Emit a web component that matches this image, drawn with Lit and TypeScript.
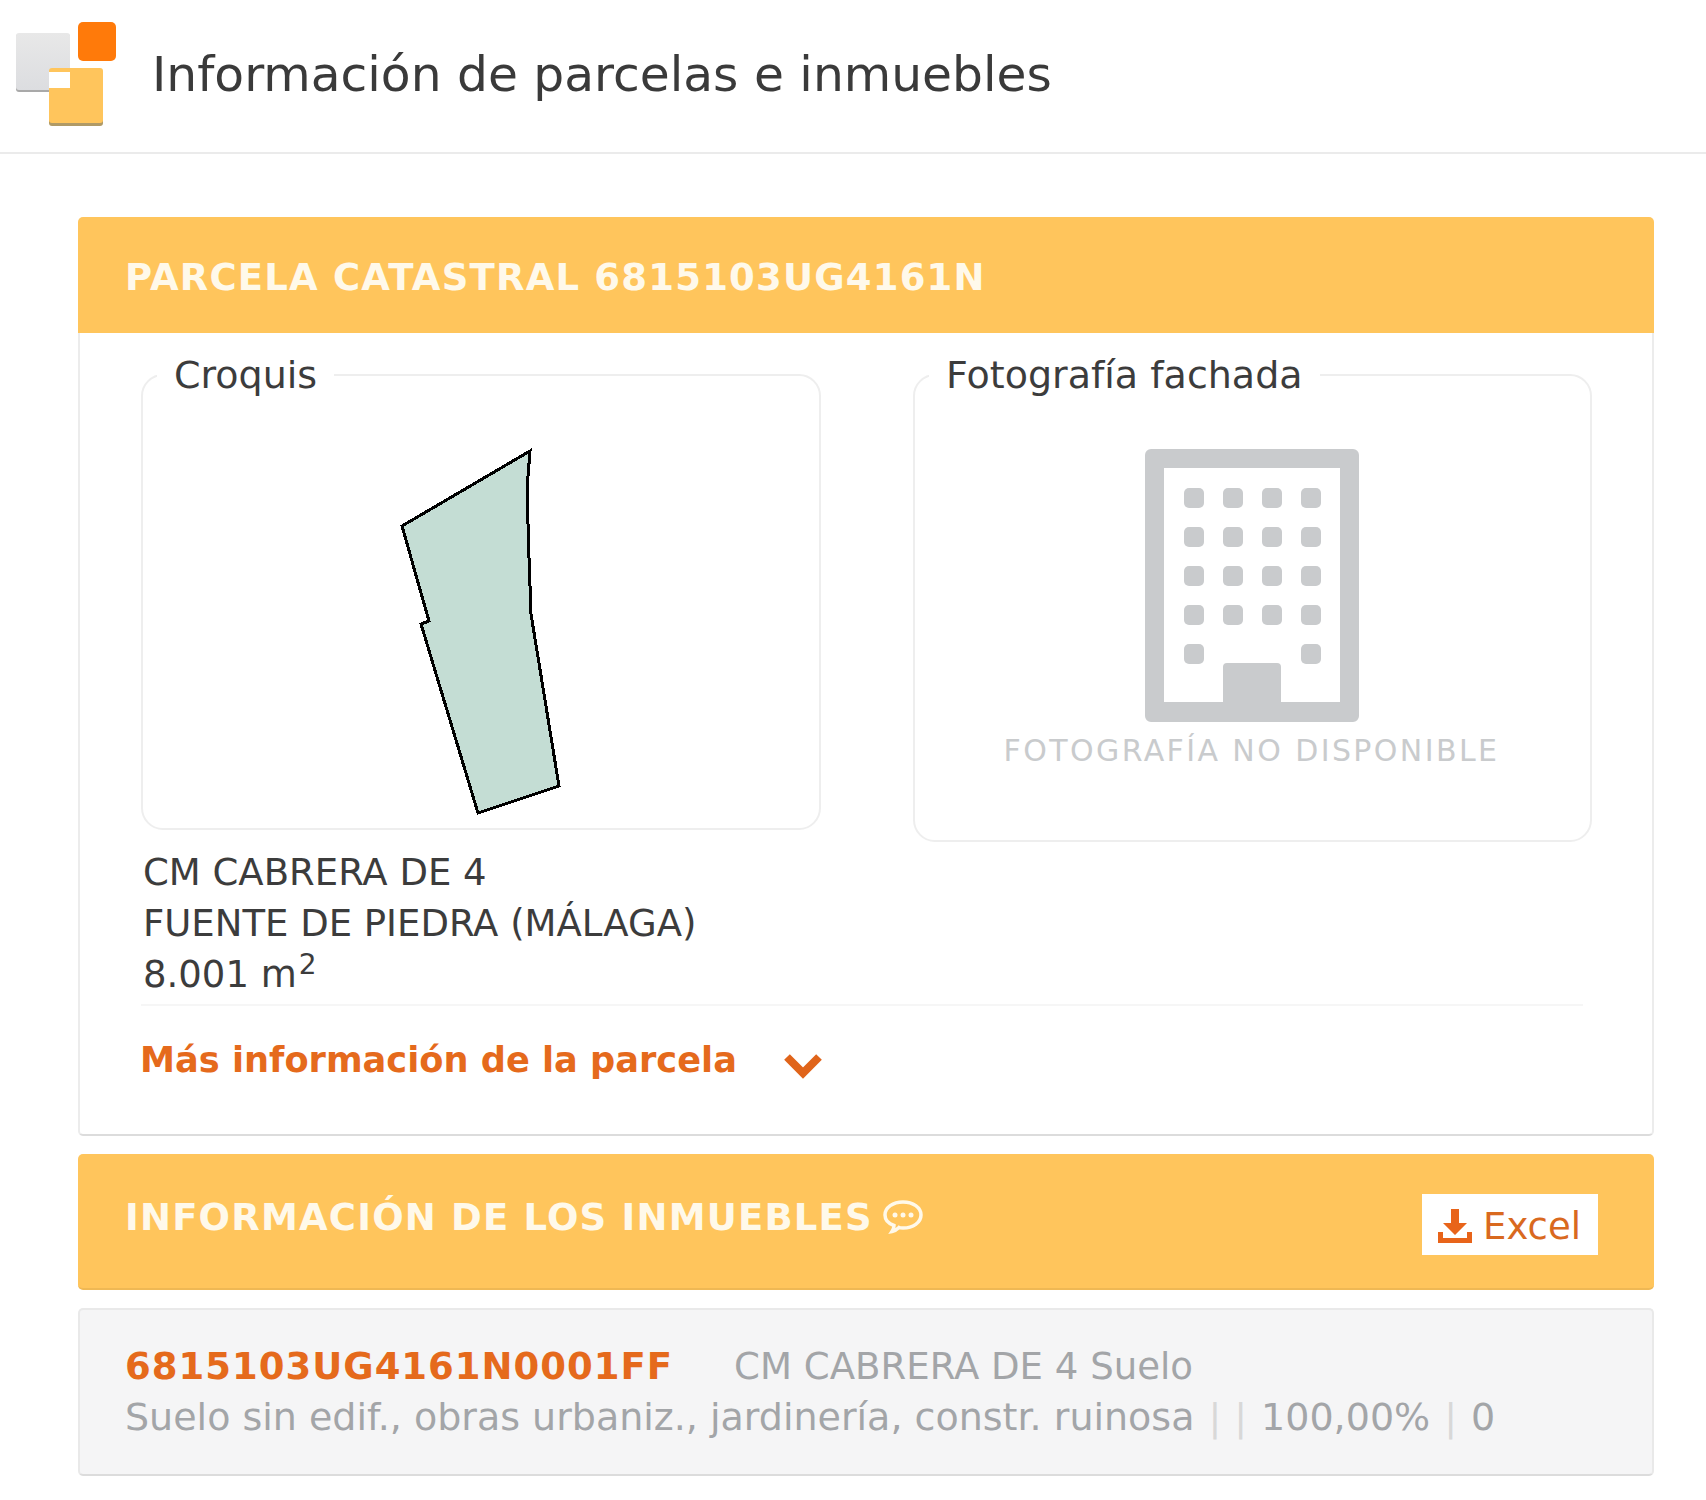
import { LitElement, html, svg, css } from 'lit';
import { customElement } from 'lit/decorators.js';

// window grid of the placeholder building, in svg units
const windowCols = [0, 1, 2, 3];
const windowRows = [0, 1, 2, 3];

@customElement('app-root')
export class AppRoot extends LitElement {
  static styles = css`
    :host {
      display: block;
      font-family: "DejaVu Sans", sans-serif;
      color: #3c3c3c;
      background: #fff;
      height: 1500px;
    }
    .top {
      display: flex;
      align-items: center;
      height: 152px;
      border-bottom: 2px solid #ebebeb;
      padding-left: 14px;
    }
    .top svg { display: block; margin-right: 34px; margin-top: -6px; }
    .top h1 {
      margin: 0;
      font-size: 48.7px;
      font-weight: 400;
      color: #3a3a3a;
      margin-top: -5px;
    }
    main { width: 1576px; margin: 63px 0 0 78px; }
    .bar {
      display: flex;
      align-items: center;
      justify-content: space-between;
      box-sizing: border-box;
      background: #ffc55c;
      border-radius: 5px 5px 0 0;
      padding: 0 56px 0 47px;
      color: #fff9ea;
      font-size: 37px;
      font-weight: 700;
      letter-spacing: 1.2px;
    }
    .bar.first { height: 116px; padding-top: 4px; }
    .bar.second {
      height: 136px;
      margin-top: 18px;
      padding-top: 6px;
      border-radius: 5px;
      border-bottom: 2px solid #efb854;
    }
    .bar .title { display: flex; align-items: center; gap: 9px; margin-top: -14px; }
    .bar svg { display: block; }
    .excel {
      display: flex;
      align-items: center;
      gap: 10px;
      box-sizing: border-box;
      width: 176px;
      height: 61px;
      padding: 4px 0 0 15px;
      background: #fff;
      color: #d9691f;
      font-size: 37px;
      font-weight: 400;
      letter-spacing: 0;
    }
    .card {
      box-sizing: border-box;
      height: 803px;
      padding: 17px 61px 0 61px;
      border: 2px solid #ececec;
      border-top: 0;
      border-bottom-color: #dcdcdc;
      border-radius: 0 0 5px 5px;
    }
    .cols { display: flex; gap: 92px; align-items: flex-start; }
    .col { flex: none; width: 680px; }
    .col + .col { width: 679px; }
    fieldset {
      box-sizing: border-box;
      display: block;
      margin: 0;
      padding: 0;
      min-width: 0;
      border: 2px solid #eeeeee;
      border-radius: 22px;
    }
    legend {
      margin-left: 14px;
      padding: 0 17px;
      font-size: 38px;
      line-height: 50px;
      color: #3c3c3c;
    }
    .sketch { height: 428px; }
    .sketch svg { display: block; }
    .photo {
      display: flex;
      flex-direction: column;
      align-items: center;
      box-sizing: border-box;
      height: 440px;
      padding: 49px 2px 0 0;
    }
    .photo span {
      margin-top: 11px;
      font-size: 30px;
      line-height: 36px;
      letter-spacing: 2.4px;
      color: #c9cbcd;
      white-space: nowrap;
    }
    .address {
      margin: 17px 0 0 2px;
      font-size: 37px;
      line-height: 51px;
      color: #3c3c3c;
    }
    sup { font-size: 28px; line-height: 0; vertical-align: 13px; margin-left: 2px; }
    .more {
      display: flex;
      align-items: center;
      margin: 4px 8px 0 0;
      padding-top: 28px;
      border-top: 2px solid #f6f6f6;
      font-size: 35.2px;
      line-height: 51px;
      font-weight: 700;
      color: #e56a1c;
    }
    .more span { margin-left: -1px; }
    .more svg { margin: 10px 0 0 44px; display: block; }
    .row {
      box-sizing: border-box;
      height: 168px;
      margin-top: 18px;
      padding: 32px 45px 0;
      background: #f5f5f6;
      border: 2px solid #e9e9e9;
      border-bottom-color: #dcdcdc;
      border-radius: 5px;
      font-size: 37.1px;
      line-height: 50px;
      color: #a3a5a8;
    }
    .row .line { display: flex; white-space: nowrap; }
    .row .line + .line { font-size: 38px; }
    .row b { color: #e56a1c; margin-right: 61px; font-size: 37px; letter-spacing: 1px; }
    .sep { color: #d8d8d8; font-weight: 400; padding: 0 14px; }
    .sep + .sep { margin-left: -15px; }
  `;

  render() {
    return html`
      <div class="top">
        <svg width="104" height="106" viewBox="0 0 104 106">
          <defs>
            <linearGradient id="g" x1="0" y1="0" x2="0" y2="1">
              <stop offset="0" stop-color="#e8e8e8"/><stop offset="1" stop-color="#dcdde0"/>
            </linearGradient>
          </defs>
          <rect x="2" y="14" width="54" height="58" rx="3" fill="#a9a9a9"/>
          <rect x="2" y="13" width="54" height="57" rx="3" fill="url(#g)"/>
          <rect x="35" y="50" width="54" height="56" rx="3" fill="#b09a66"/>
          <rect x="35" y="48" width="54" height="55" rx="3" fill="#ffc55c"/>
          <rect x="35" y="52" width="21" height="16" fill="#fff"/>
          <rect x="64" y="2" width="38" height="39" rx="5" fill="#ff7a0a"/>
        </svg>
        <h1>Información de parcelas e inmuebles</h1>
      </div>
      <main>
        <div class="bar first"><span>PARCELA CATASTRAL 6815103UG4161N</span></div>
        <section class="card">
          <div class="cols">
            <div class="col">
              <fieldset>
                <legend>Croquis</legend>
                <div class="sketch">
                  <svg width="675" height="428" viewBox="0 0 675 428">
                    <polygon
                      points="387,51 384,89 386,158 388,214 416,386 335,413 278,224 286,221 259,126"
                      fill="#c4ddd4" stroke="#000" stroke-width="3" shape-rendering="crispEdges"/>
                  </svg>
                </div>
              </fieldset>
              <div class="address">
                CM CABRERA DE 4<br />
                FUENTE DE PIEDRA (MÁLAGA)<br />
                8.001 m<sup>2</sup>
              </div>
            </div>
            <div class="col">
              <fieldset>
                <legend>Fotografía fachada</legend>
                <div class="photo">
                  <svg width="214" height="273" viewBox="0 0 214 273">
                    <path fill="#c9cbcd" fill-rule="evenodd"
                      d="M6 0h202a6 6 0 0 1 6 6v261a6 6 0 0 1-6 6H6a6 6 0 0 1-6-6V6a6 6 0 0 1 6-6zM19 19v234h59v-35a4 4 0 0 1 4-4h50a4 4 0 0 1 4 4v35h59V19z"/>
                    ${windowRows.map((r) =>
                      windowCols.map(
                        (c) =>
                          svg`<rect x=${39 + c * 39} y=${39 + r * 39} width="20" height="20" rx="5" fill="#c9cbcd"/>`
                      )
                    )}
                    <rect x="39" y="195" width="20" height="20" rx="5" fill="#c9cbcd"/>
                    <rect x="156" y="195" width="20" height="20" rx="5" fill="#c9cbcd"/>
                  </svg>
                  <span>FOTOGRAFÍA NO DISPONIBLE</span>
                </div>
              </fieldset>
            </div>
          </div>
          <div class="more">
            <span>Más información de la parcela</span>
            <svg width="44" height="30" viewBox="0 0 44 30">
              <polyline points="6,7 22,23 38,7" fill="none" stroke="#e0641a" stroke-width="8"/>
            </svg>
          </div>
        </section>
        <div class="bar second">
          <span class="title">
            INFORMACIÓN DE LOS INMUEBLES
            <svg width="42" height="36" viewBox="0 0 42 36">
              <path d="M21 3c10 0 18 5.500 18 13s-8 13-18 13c-1.500 0-3 0-4-.500-2 2-4.500 3.500-7 4 1-1.500 2-3.500 2-6C6 24.500 3 20.500 3 16 3 8.500 11 3 21 3z"
                fill="none" stroke="#fff9ea" stroke-width="3.500"/>
              <circle cx="13" cy="16" r="2.500" fill="#fff9ea"/>
              <circle cx="21" cy="16" r="2.500" fill="#fff9ea"/>
              <circle cx="29" cy="16" r="2.500" fill="#fff9ea"/>
            </svg>
          </span>
          <span class="excel">
            <svg width="36" height="36" viewBox="0 0 36 36">
              <path d="M14 1h8v14h8L18 27 6 15h8z" fill="#e8641a"/>
              <path d="M1 24h5v6h24v-6h5v11H1z" fill="#e8641a"/>
            </svg>
            Excel
          </span>
        </div>
        <div class="row">
          <div class="line"><b>6815103UG4161N0001FF</b><span>CM CABRERA DE 4 Suelo</span></div>
          <div class="line">
            <span>Suelo sin edif., obras urbaniz., jardinería, constr. ruinosa</span><span class="sep">|</span><span class="sep">|</span><span>100,00%</span><span class="sep">|</span><span>0</span>
          </div>
        </div>
      </main>
    `;
  }
}
